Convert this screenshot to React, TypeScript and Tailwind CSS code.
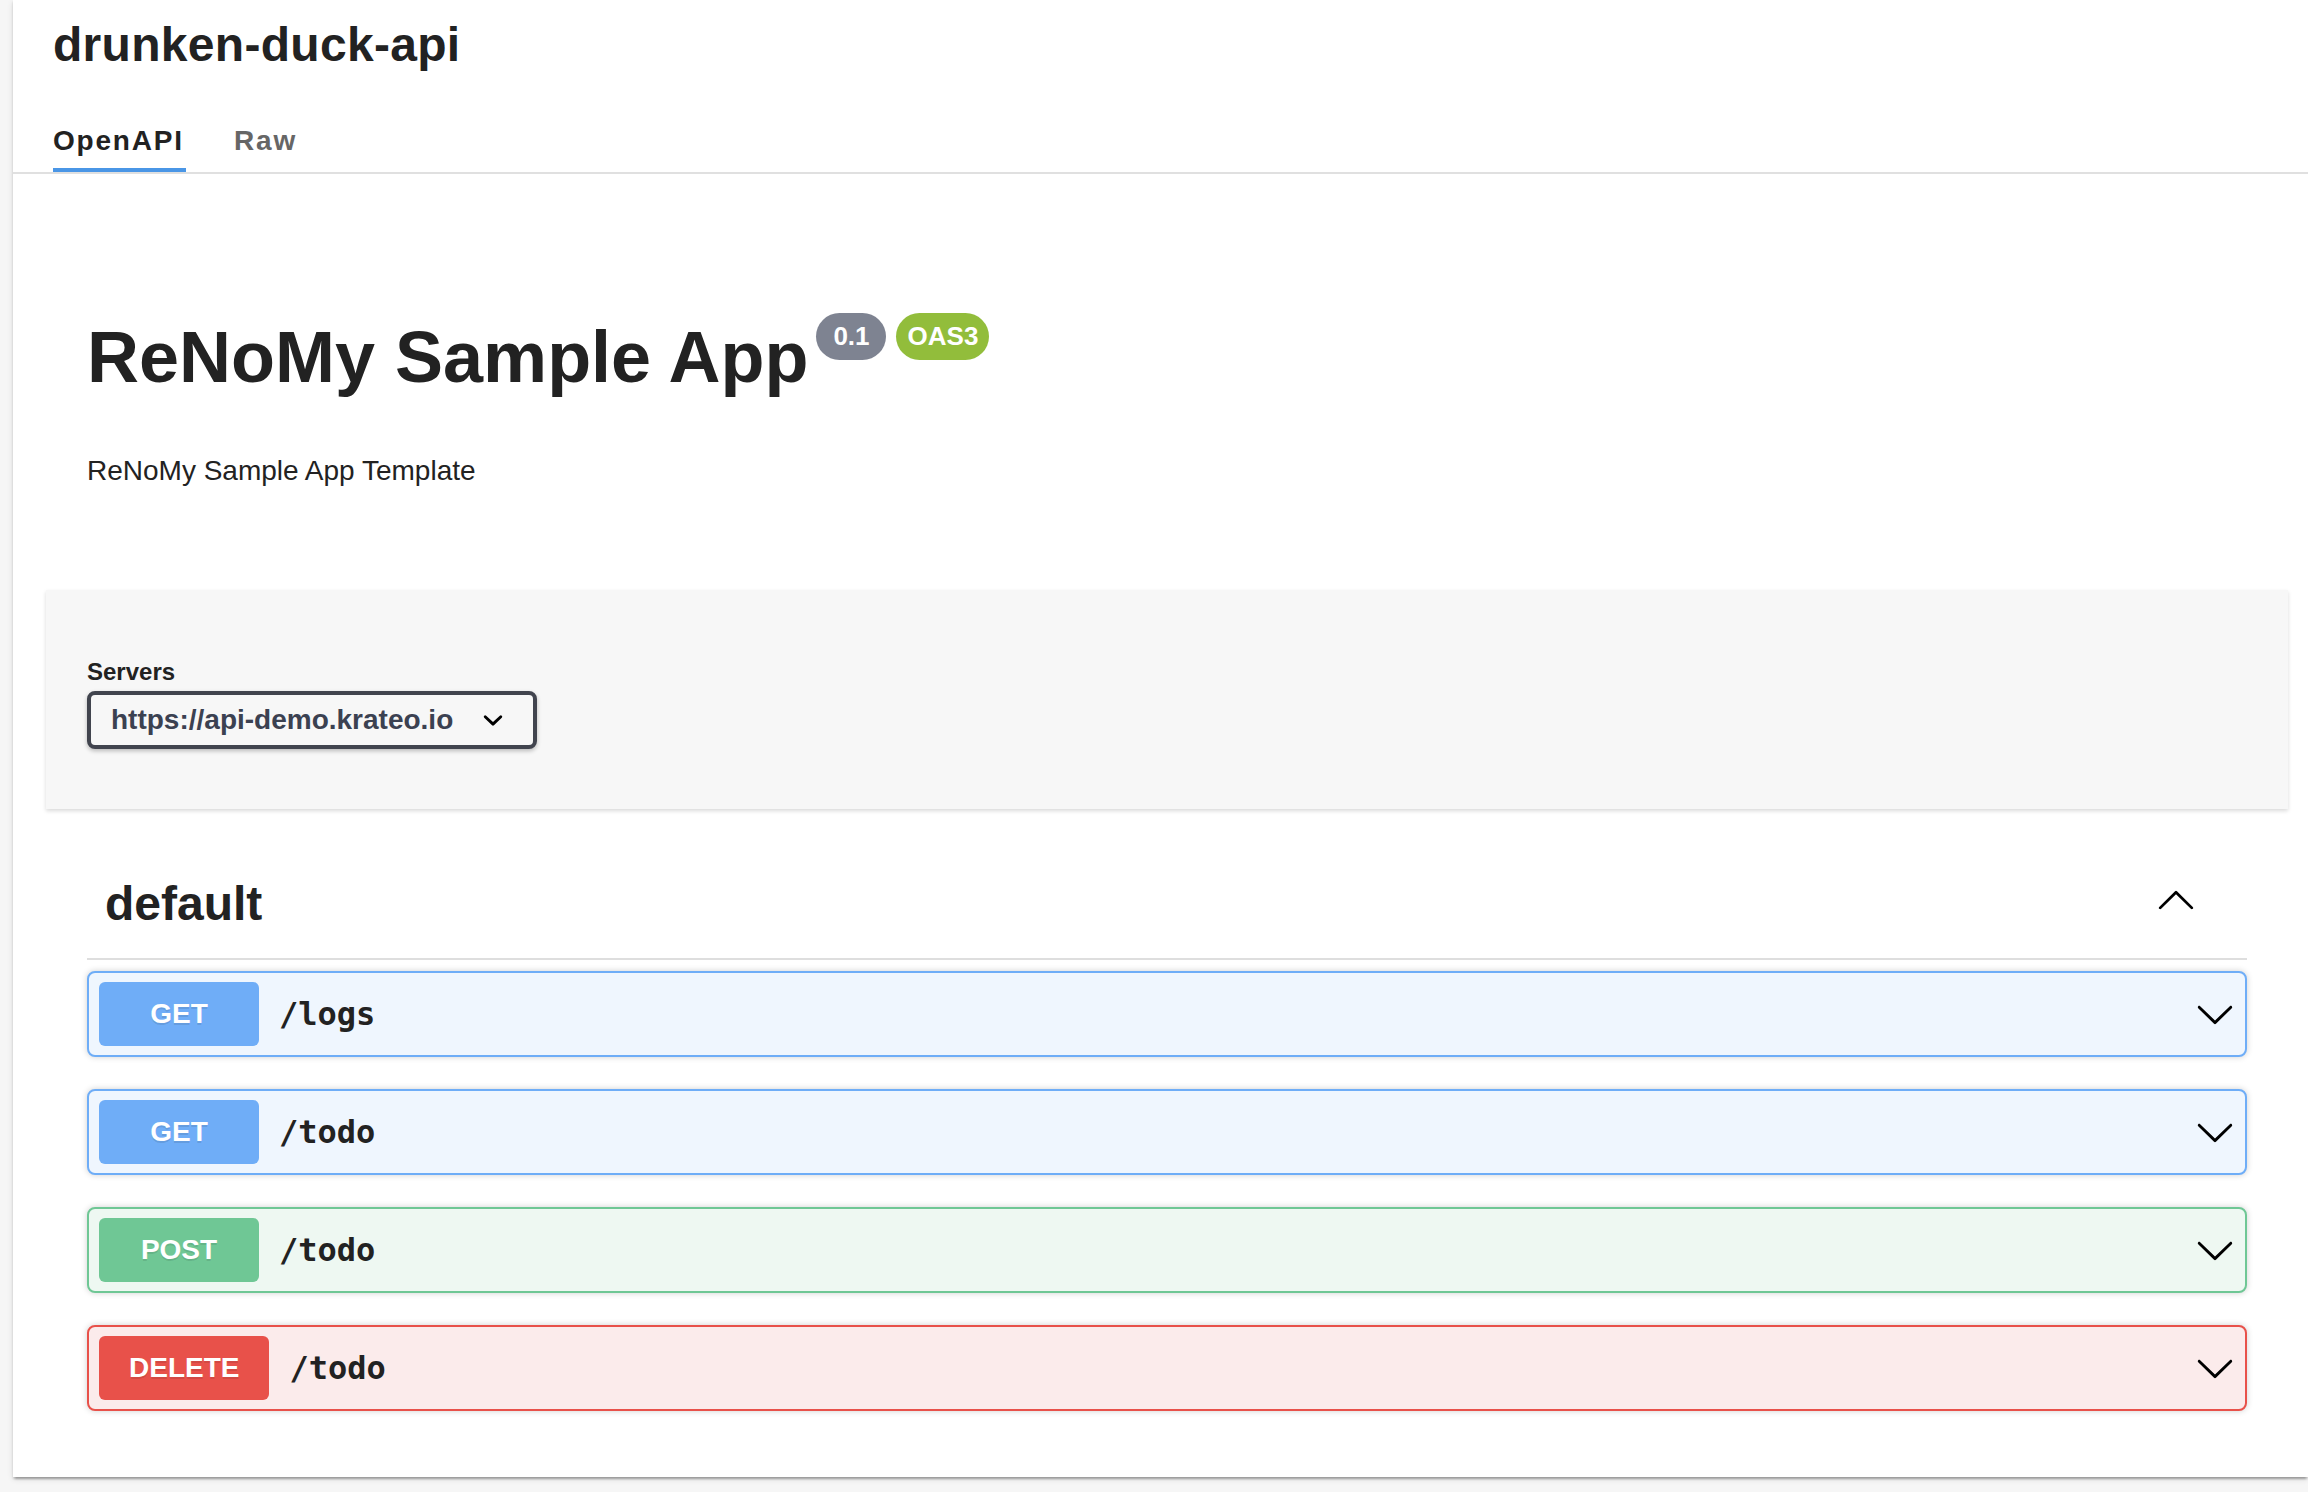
import React from 'react';

const ARROW_DOWN =
  'M17.418 6.109c.272-.268.709-.268.979 0s.271.701 0 .969l-7.908 7.83c-.27.268-.707.268-.979 0l-7.908-7.83c-.27-.268-.27-.701 0-.969.271-.268.709-.268.979 0L10 13.25l7.418-7.141z';
const ARROW_UP =
  'M17.418 14.908c.272.268.709.268.979 0s.271-.701 0-.969l-7.908-7.83a.697.697 0 00-.979 0l-7.908 7.83c-.27.268-.27.701 0 .969.271.268.709.268.979 0L10 7.592l7.418 7.316z';
const SELECT_ARROW =
  'M13.418 7.859a.695.695 0 01.978 0 .68.68 0 010 .969l-3.908 3.83a.697.697 0 01-.979 0l-3.908-3.83a.68.68 0 010-.969.695.695 0 01.978 0L10 11l3.418-3.141z';

const ops = [
  { method: 'GET', path: '/logs', row: 'bg-[#eff6fe] border-[#6eadf7]', badge: 'bg-[#6fadf7]' },
  { method: 'GET', path: '/todo', row: 'bg-[#eff6fe] border-[#6eadf7]', badge: 'bg-[#6fadf7]' },
  { method: 'POST', path: '/todo', row: 'bg-[#eef8f2] border-[#6fc795]', badge: 'bg-[#6fc795]' },
  { method: 'DELETE', path: '/todo', row: 'bg-[#fbebeb] border-[#e8514a]', badge: 'bg-[#e8514a]' },
];

function Arrow({ d, className }: { d: string; className?: string }) {
  return (
    <svg viewBox="0 0 20 20" width={40} height={40} className={className}>
      <path d={d} fill="#000" />
    </svg>
  );
}

export default function App() {
  return (
    <div className="min-h-screen bg-[#f6f6f6] pl-[13px] font-['Liberation_Sans',Arial,sans-serif] text-[#222]">
      <div className="bg-white pb-[66px] shadow-[0_4px_2px_-2px_rgba(0,0,0,0.2),0_2px_2px_0_rgba(0,0,0,0.14),0_2px_6px_0_rgba(0,0,0,0.12)]">
        {/* card header */}
        <div className="border-b-2 border-[#e0e0e0] px-[40px]">
          <div className="pt-[17px] text-[48px] font-bold leading-[56px] tracking-[0.3px] text-[#222]">drunken-duck-api</div>
          <div className="mt-[48px] flex">
            <div className="w-[133px]">
              <div className="pb-[7px] text-[28px] font-bold leading-[40px] tracking-[1.8px] text-[#222]">OpenAPI</div>
              <div className="h-[4px] bg-[#4a96e6]" />
            </div>
            <div className="ml-[48px] text-[28px] font-bold leading-[40px] tracking-[1.8px] text-[#666]">Raw</div>
          </div>
        </div>

        {/* swagger */}
        <div className="ml-[33px] mr-[20px]">
          <div className="px-[41px] pt-[142px]">
            <div className="flex items-start">
              <h1 className="text-[72px] font-bold leading-[83px] text-[#222]">ReNoMy Sample App</h1>
              <div className="ml-[8px] mt-[-3px] flex gap-[10px]">
                <span className="flex h-[47px] w-[70px] items-center justify-center rounded-full bg-[#7e8391] text-[26px] font-bold text-white">
                  0.1
                </span>
                <span className="flex h-[47px] w-[93px] items-center justify-center rounded-full bg-[#92bd3b] text-[26px] font-bold text-white">
                  OAS3
                </span>
              </div>
            </div>
            <p className="mt-[52px] text-[28px] leading-[40px] text-[#222]">ReNoMy Sample App Template</p>
          </div>

          <div className="mt-[99px] bg-[#f7f7f7] px-[41px] pb-[60px] pt-[64px] shadow-[0_2px_4px_0_rgba(0,0,0,0.15)]">
            <div className="text-[24px] font-bold leading-[36px] text-[#222]">Servers</div>
            <div className="relative mt-[1px] inline-flex h-[58px] items-center rounded-[8px] border-[4px] border-[#41444e] bg-[#f7f7f7] pl-[20px] pr-[80px] text-[28px] font-bold text-[#3b4151] shadow-[0_2px_4px_0_rgba(0,0,0,0.25)]">
              https://api-demo.krateo.io
              <Arrow d={SELECT_ARROW} className="absolute right-[20px] top-1/2 -translate-y-1/2" />
            </div>
          </div>

          <div className="mt-[40px] px-[41px]">
            <div className="flex items-center border-b-2 border-[#dedede] py-[20px] pl-[18px] pr-[51px]">
              <h3 className="text-[48px] font-bold leading-[69px] text-[#222]">default</h3>
              <Arrow d={ARROW_UP} className="mb-[9px] ml-auto" />
            </div>

            <div className="mt-[11px] flex flex-col gap-[32px]">
              {ops.map((op, i) => (
                <div
                  key={i}
                  className={`flex h-[86px] items-center rounded-[8px] border-2 px-[10px] shadow-[0_0_6px_rgba(0,0,0,0.19)] ${op.row}`}
                >
                  <span
                    className={`flex h-[64px] min-w-[160px] items-center justify-center rounded-[6px] px-[30px] text-[28px] font-bold text-white [text-shadow:0_2px_0_rgba(0,0,0,0.1)] ${op.badge}`}
                  >
                    {op.method}
                  </span>
                  <span className="px-[20px] font-['DejaVu_Sans_Mono',monospace] text-[32px] font-bold text-[#222]">
                    {op.path}
                  </span>
                  <Arrow d={ARROW_DOWN} className="ml-auto" />
                </div>
              ))}
            </div>
          </div>
        </div>
      </div>
    </div>
  );
}
